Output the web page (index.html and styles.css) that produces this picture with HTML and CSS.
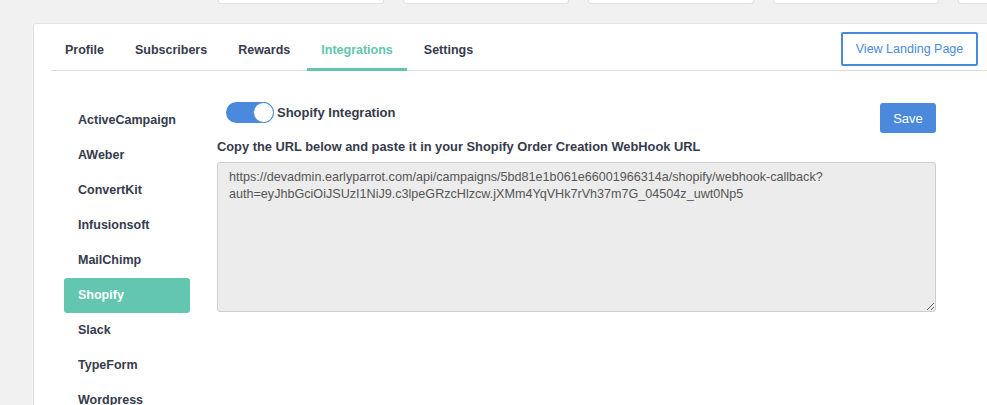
FILE: index.html
```html
<!DOCTYPE html>
<html>
<head>
<meta charset="utf-8">
<link rel="stylesheet" href="styles.css">
</head>
<body>
<div class="stats">
  <div class="stat"></div>
  <div class="stat"></div>
  <div class="stat"></div>
  <div class="stat"></div>
  <div class="stat"></div>
</div>
<div class="card">
  <div class="tabs">
    <a class="tab">Profile</a>
    <a class="tab">Subscribers</a>
    <a class="tab">Rewards</a>
    <a class="tab active">Integrations</a>
    <a class="tab">Settings</a>
    <button class="landing">View Landing Page</button>
  </div>
  <div class="body">
    <ul class="nav">
      <li>ActiveCampaign</li>
      <li>AWeber</li>
      <li>ConvertKit</li>
      <li>Infusionsoft</li>
      <li>MailChimp</li>
      <li class="active">Shopify</li>
      <li>Slack</li>
      <li>TypeForm</li>
      <li>Wordpress</li>
    </ul>
    <div class="panel">
      <div class="head">
        <div class="toggle-group">
          <span class="toggle"><span class="knob"></span></span>
          <span class="toggle-label">Shopify Integration</span>
        </div>
        <button class="save">Save</button>
      </div>
      <div class="label">Copy the URL below and paste it in your Shopify Order Creation WebHook URL</div>
      <textarea class="url" readonly>https://devadmin.earlyparrot.com/api/campaigns/5bd81e1b061e66001966314a/shopify/webhook-callback?
auth=eyJhbGciOiJSUzI1NiJ9.c3lpeGRzcHlzcw.jXMm4YqVHk7rVh37m7G_04504z_uwt0Np5</textarea>
    </div>
  </div>
</div>
</body>
</html>
```
FILE: styles.css
```css
html, body {
  margin: 0;
  padding: 0;
  background: #f1f1f1;
  font-family: "Liberation Sans", Arial, sans-serif;
  overflow: hidden;
  width: 987px;
  height: 405px;
}
.stats {
  display: flex;
  gap: 19px;
  padding-left: 218px;
  height: 5px;
}
.stat {
  flex: 0 0 166px;
  box-sizing: border-box;
  height: 4px;
  background: #fff;
  border: 1px solid #e2e2e2;
  border-top: none;
  border-radius: 0 0 3px 3px;
}
.card {
  margin: 18px 0 0 33px;
  width: 960px;
  height: 420px;
  box-sizing: border-box;
  background: #fff;
  border: 1px solid #e3e3e3;
  border-radius: 3px;
  padding: 8px 0 0 17px;
}
.tabs {
  display: flex;
  align-items: flex-start;
  border-bottom: 1px solid #dcdcdc;
  height: 38px;
}
.tab {
  display: block;
  font-size: 12.5px;
  font-weight: bold;
  color: #363b4d;
  line-height: 16px;
  padding: 10px 14px 10px 14px;
  margin-right: 3px;
  border-bottom: 3px solid transparent;
  cursor: pointer;
}
.tab.active {
  color: #62c5ae;
  border-bottom-color: #62c5ae;
}
.landing {
  margin-left: auto;
  margin-right: 14px;
  margin-top: 0;
  width: 137px;
  height: 34px;
  background: #fff;
  border: 2px solid #4a89dc;
  border-radius: 2px;
  color: #4a89dc;
  font-family: "Liberation Sans", Arial, sans-serif;
  font-size: 12.5px;
  padding: 0;
}
.body {
  display: flex;
  gap: 27px;
  padding: 31px 0 0 13px;
}
.nav {
  list-style: none;
  margin: 1px 0 0 0;
  padding: 0;
  width: 126px;
}
.nav li {
  height: 35px;
  line-height: 35px;
  padding-left: 14px;
  font-size: 12.5px;
  font-weight: bold;
  color: #363b4d;
  border-radius: 3px;
}
.nav li.active {
  background: #63c6b0;
  color: #fff;
}
.panel {
  width: 719px;
}
.head {
  display: flex;
  justify-content: space-between;
  align-items: flex-start;
  height: 31px;
}
.toggle-group {
  display: flex;
  align-items: center;
  gap: 3px;
}
.toggle {
  display: block;
  position: relative;
  width: 48px;
  height: 21px;
  margin-left: 9px;
  background: #4a89dc;
  border-radius: 11px;
}
.knob {
  position: absolute;
  right: 0;
  top: 0;
  width: 19px;
  height: 19px;
  background: #fff;
  border: 1px solid #4a89dc;
  border-radius: 50%;
}
.toggle-label {
  font-size: 13px;
  font-weight: bold;
  color: #363b4d;
  line-height: 16px;
}
.save {
  margin-top: 1px;
  width: 56px;
  height: 30px;
  background: #4a89dc;
  border: none;
  border-radius: 3px;
  color: #fff;
  font-family: "Liberation Sans", Arial, sans-serif;
  font-size: 13px;
  padding: 0;
}
.label {
  margin-top: 6px;
  font-size: 12.85px;
  font-weight: bold;
  color: #363b4d;
  line-height: 16px;
}
.url {
  display: block;
  margin-top: 7px;
  width: 719px;
  height: 150px;
  box-sizing: border-box;
  background: #ececec;
  border: 1px solid #cfcfcf;
  border-radius: 3px;
  padding: 6px 11px;
  font-family: "Liberation Sans", Arial, sans-serif;
  font-size: 12.6px;
  line-height: 17px;
  color: #555;
  resize: vertical;
  outline: none;
}
```
